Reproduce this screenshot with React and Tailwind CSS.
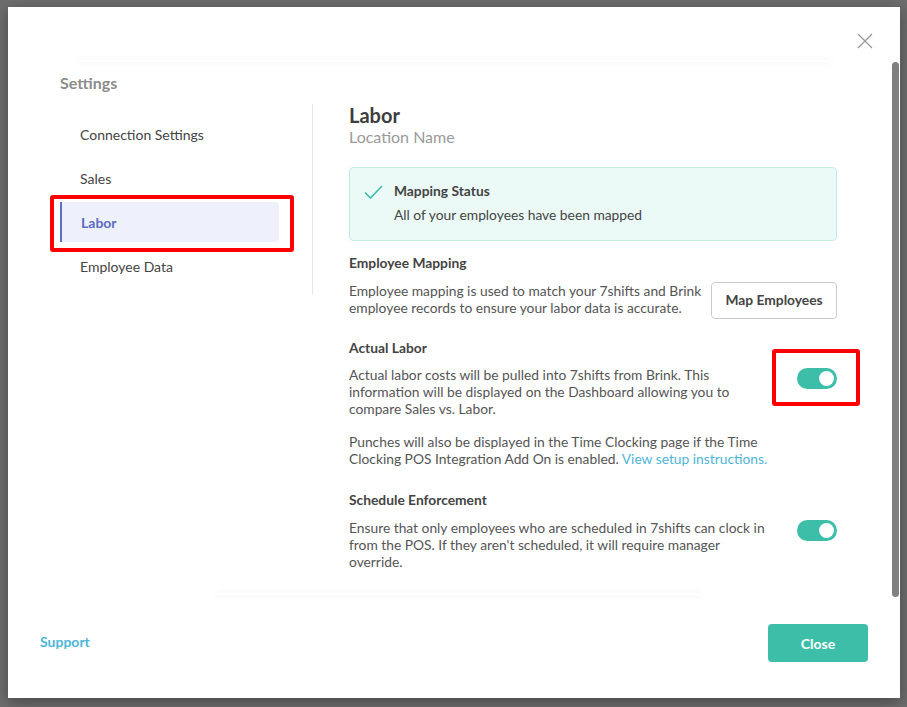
import React from 'react';

const navItems = ['Connection Settings', 'Sales', 'Labor', 'Employee Data'];

const Toggle = ({ on = true }) => (
  <div className={`w-[40px] h-[21px] rounded-full flex items-center px-[3px] ${on ? 'bg-[#3dbea8] justify-end' : 'bg-[#ccc] justify-start'}`}>
    <div className="w-[15px] h-[15px] rounded-full bg-white" />
  </div>
);

const Highlight = ({ className }) => (
  <div className={`absolute border-[4px] border-[#ff0000] rounded-[3px] pointer-events-none ${className}`} />
);

export default function App() {
  return (
    <div
      className="relative w-[907px] h-[707px] overflow-hidden bg-[#6d6d6d] text-[13.8px] text-[#555]"
      style={{ fontFamily: 'Lato, "Open Sans", sans-serif' }}
    >
      <div className="ml-[8px] mt-[7px] w-[892px] h-[691px] bg-white flex flex-col shadow-[0_4px_14px_rgba(0,0,0,0.35)]">
        {/* header */}
        <div className="h-[53px] shrink-0 relative flex justify-end items-start pt-[26px] pr-[27px]">
          <button className="w-[16px] h-[16px] text-[#9a9a9a]">
            <svg viewBox="0 0 16 16" width="16" height="16" fill="none" stroke="currentColor" strokeWidth="1.3">
              <path d="M1 1 L15 15 M15 1 L1 15" />
            </svg>
          </button>
          <div className="absolute left-[70px] right-[70px] bottom-[-2px] h-[2px] rounded-full shadow-[0_0_6px_2px_rgba(0,0,0,0.03)]" />
        </div>

        {/* body */}
        <div className="h-[537px] shrink-0 flex overflow-hidden">
          <div className="flex-1 pl-[52px] pt-[14px]">
            <div className="text-[16px] leading-[18px] font-bold text-[#8c8c8c]">Settings</div>

            <div className="flex mt-[12px]">
              <nav className="w-[253px] pr-[33px] pt-[10px] flex flex-col gap-[4px] self-start border-r border-[#e6e6e6] h-[191px] box-border text-[14px]">
                {navItems.map((item) =>
                  item === 'Labor' ? (
                    <div key={item} className="relative">
                      <div className="h-[40px] flex items-center pl-[19px] bg-[#eef1fb] border-l-[2px] border-[#5d6fc4] rounded-r-[4px] font-bold text-[#5b6dc2]">
                        {item}
                      </div>
                      <Highlight className="-left-[10px] -right-[15px] -top-[7px] -bottom-[10px]" />
                    </div>
                  ) : (
                    <div key={item} className="h-[40px] flex items-center pl-[20px] text-[#444]">
                      {item}
                    </div>
                  )
                )}
              </nav>

              <div className="w-[524px] pl-[36px]">
                <h1 className="text-[20px] leading-[22px] font-bold text-[#3d3d3d]">Labor</h1>
                <div className="text-[16px] leading-[22px] text-[#9a9a9a]">Location Name</div>

                <div className="mt-[19px] h-[74px] border border-[#c4ebe2] bg-[#ebfaf7] rounded-[4px] pl-[14px] pt-[14px] flex gap-[11px]">
                  <svg viewBox="0 0 19 14" width="19" height="14" className="mt-[3px] shrink-0" fill="none" stroke="#3dbea8" strokeWidth="1.6">
                    <path d="M1 7.5 L6.5 13 L18 1" />
                  </svg>
                  <div>
                    <div className="leading-[18px] font-bold text-[#444]">Mapping Status</div>
                    <div className="leading-[18px] mt-[6px] text-[#444]">All of your employees have been mapped</div>
                  </div>
                </div>

                <h2 className="mt-[13px] leading-[18px] font-bold text-[#444]">Employee Mapping</h2>
                <div className="mt-[10px] flex items-start gap-[6px]">
                  <p className="flex-1 leading-[17px]">
                    Employee mapping is used to match your 7shifts and Brink employee records to ensure your labor data is accurate.
                  </p>
                  <button className="shrink-0 w-[126px] h-[37px] border border-[#ccc] rounded-[4px] font-bold text-[#444]">
                    Map Employees
                  </button>
                </div>

                <h2 className="mt-[20px] leading-[18px] font-bold text-[#444]">Actual Labor</h2>
                <div className="mt-[9px] flex items-start gap-[24px]">
                  <div className="flex-1 leading-[17px]">
                    <p>
                      Actual labor costs will be pulled into 7shifts from Brink. This information will be displayed on the Dashboard allowing you to compare Sales vs. Labor.
                    </p>
                    <p className="mt-[16px]">
                      Punches will also be displayed in the Time Clocking page if the Time Clocking POS Integration Add On is enabled.{' '}
                      <a className="text-[#4db6d9]">View setup instructions.</a>
                    </p>
                  </div>
                  <div className="relative mt-[2px] shrink-0">
                    <Toggle />
                    <Highlight className="-left-[25px] -right-[23px] -top-[19px] -bottom-[17px]" />
                  </div>
                </div>

                <h2 className="mt-[24px] leading-[18px] font-bold text-[#444]">Schedule Enforcement</h2>
                <div className="mt-[10px] flex items-start gap-[24px]">
                  <p className="flex-1 leading-[17px]">
                    Ensure that only employees who are scheduled in 7shifts can clock in from the POS. If they aren't scheduled, it will require manager override.
                  </p>
                  <div className="mt-[1px] shrink-0">
                    <Toggle />
                  </div>
                </div>
              </div>
            </div>
          </div>

          {/* scrollbar */}
          <div className="w-[8px] shrink-0 pt-[2px] pr-[1px]">
            <div className="w-[7px] h-[535px] rounded-full bg-[#808080]" />
          </div>
        </div>

        {/* footer */}
        <div className="flex-1 relative flex items-start justify-between px-[32px] pt-[27px]">
          <div className="absolute left-[210px] right-[200px] top-[-4px] h-[2px] rounded-full shadow-[0_0_6px_2px_rgba(0,0,0,0.03)]" />
          <a className="mt-[9px] font-bold text-[#4db6d9] leading-[18px] text-[14px]">Support</a>
          <button className="w-[100px] h-[38px] rounded-[4px] bg-[#3dbea8] text-white font-bold text-[14px]">Close</button>
        </div>
      </div>
    </div>
  );
}
